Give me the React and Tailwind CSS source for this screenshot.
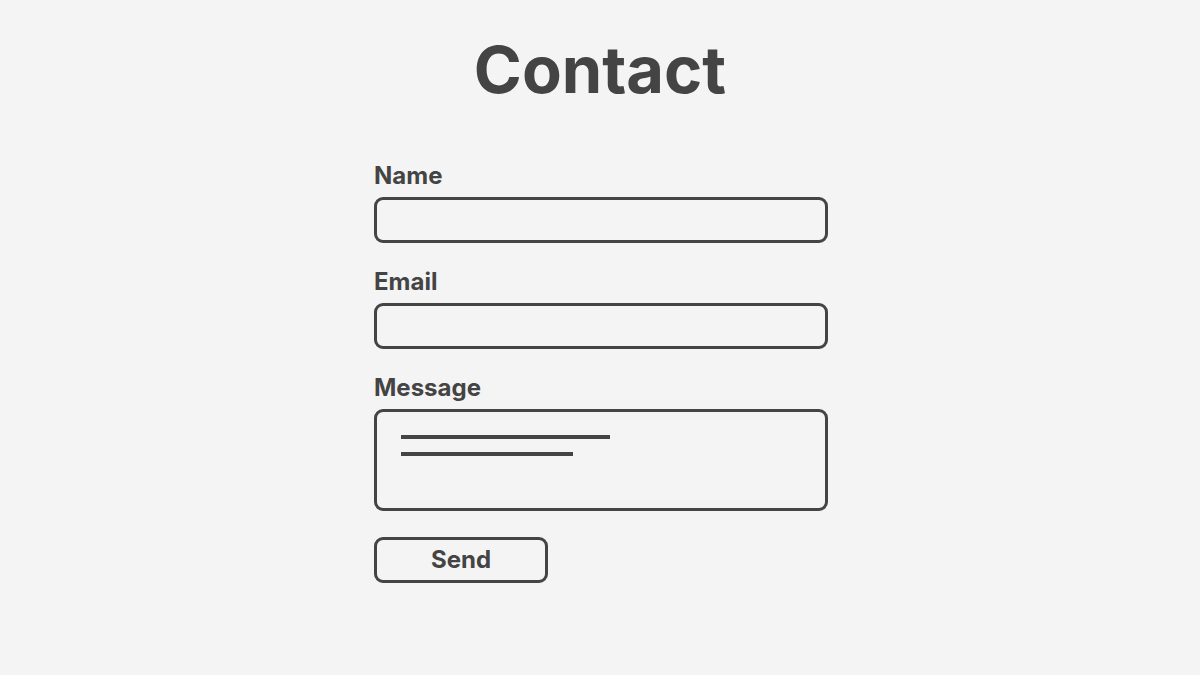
const fields = [
  { label: 'Name' },
  { label: 'Email' },
];

export default function App() {
  return (
    <div
      className="min-h-[675px] w-full bg-[#f4f4f4] text-[#444444] flex flex-col items-center"
      style={{ fontFamily: 'Inter, "Noto Sans", sans-serif' }}
    >
      <h1 className="mt-[37px] text-[65px] leading-[65px] font-bold">Contact</h1>

      <form className="w-[454px] ml-[2px] mt-[60px] flex flex-col">
        {fields.map(({ label }) => (
          <div key={label} className="flex flex-col mb-[25px]">
            <label className="text-[24px] leading-[28px] font-bold">{label}</label>
            <div className="mt-[7px] h-[46px] border-[3.5px] border-[#444444] rounded-[9px]" />
          </div>
        ))}

        <div className="flex flex-col">
          <label className="text-[24px] leading-[28px] font-bold">Message</label>
          <div className="mt-[7px] h-[102px] border-[3.5px] border-[#444444] rounded-[9px] pl-[23.5px] pt-[22.5px] flex flex-col gap-[13px]">
            <div className="w-[209px] h-[4px] bg-[#444444]" />
            <div className="w-[172px] h-[4px] bg-[#444444]" />
          </div>
        </div>

        <button
          type="button"
          className="mt-[26px] w-[174px] h-[46px] border-[3.5px] border-[#444444] rounded-[9px] text-[24px] font-bold flex items-center justify-center"
        >
          Send
        </button>
      </form>
    </div>
  );
}
